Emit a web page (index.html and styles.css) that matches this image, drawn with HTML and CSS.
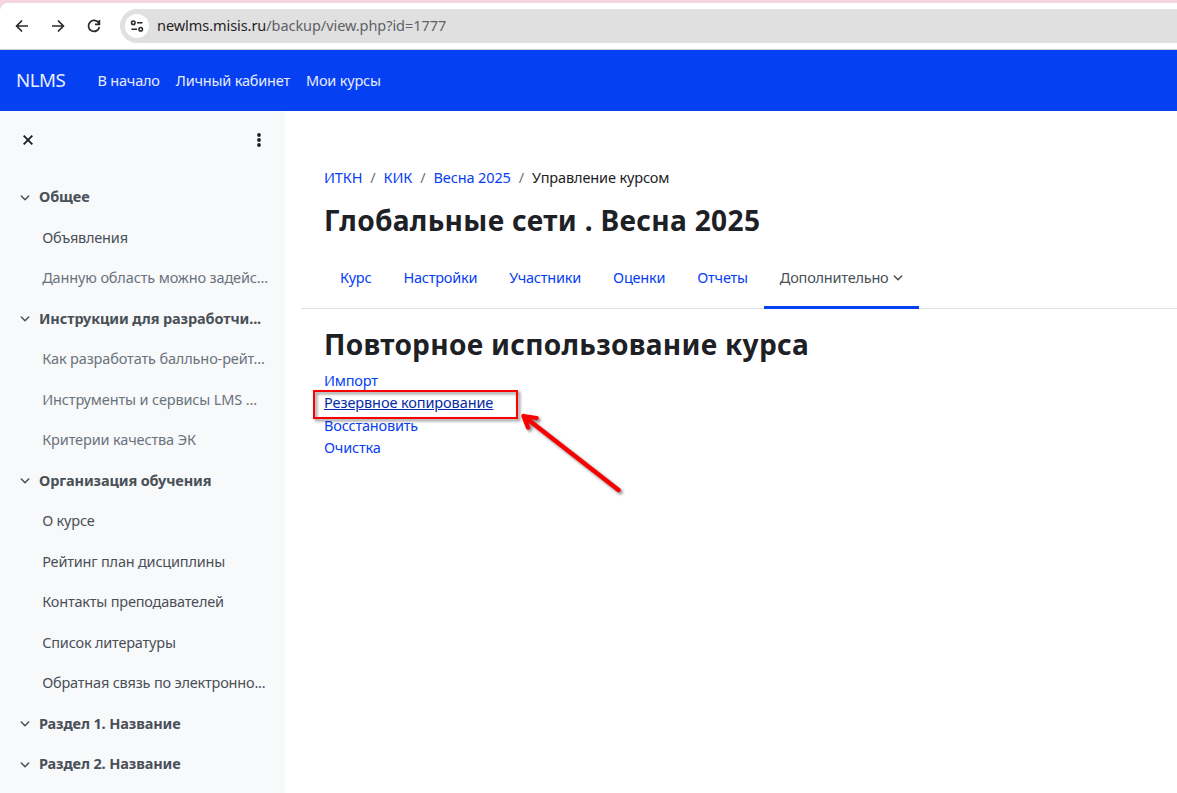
FILE: index.html
```html
<!DOCTYPE html>
<html lang="ru">
<head>
<meta charset="utf-8">
<title>Повторное использование курса</title>
<link rel="stylesheet" href="styles.css">
</head>
<body>
<svg class="defs" width="0" height="0">
  <symbol id="chev" viewBox="0 0 10 6"><path d="M1.300 1 5 4.700 8.700 1" fill="none" stroke="currentColor" stroke-width="1.5" stroke-linecap="round" stroke-linejoin="round"/></symbol>
</svg>
<div class="browser">
  <div class="toolbar">
    <svg class="tool" viewBox="0 0 16 16"><path d="M14 8H3M8 2.5 2.6 8 8 13.5"/></svg>
    <svg class="tool" viewBox="0 0 16 16"><path d="M2 8h11M8 2.5 13.4 8 8 13.5"/></svg>
    <svg class="tool" viewBox="0 0 16 16"><path d="M12.8 5.2A5.5 5.5 0 1 0 13.4 9M13.4 2v4.4H9"/></svg>
    <div class="address">
      <span class="site"><svg viewBox="0 0 14 14"><circle cx="3.3" cy="3.8" r="1.8"/><path d="M7 3.8h5.5M1.5 10.2H7"/><circle cx="10.7" cy="10.2" r="1.8"/></svg></span>
      <span class="url"><b>newlms.misis.ru</b>/backup/view.php?id=1777</span>
    </div>
  </div>
</div>
<nav class="navbar">
  <a class="brand">NLMS</a><a>В начало</a><a>Личный кабинет</a><a>Мои курсы</a>
</nav>
<div class="page">
  <aside class="drawer">
    <div class="drawer-head">
      <svg class="close" viewBox="0 0 10 10"><path d="M.7.700l8.600 8.600M9.300.700.7 9.300"/></svg>
      <svg class="dots" viewBox="0 0 4 14"><circle cx="2" cy="2" r="1.9"/><circle cx="2" cy="7" r="1.9"/><circle cx="2" cy="12" r="1.9"/></svg>
    </div>
    <div class="section"><svg><use href="#chev"/></svg><span>Общее</span></div>
    <div class="item">Объявления</div>
    <div class="item dim">Данную область можно задейс...</div>
    <div class="section"><svg><use href="#chev"/></svg><span>Инструкции для разработчи...</span></div>
    <div class="item dim">Как разработать балльно-рейт...</div>
    <div class="item dim">Инструменты и сервисы LMS ...</div>
    <div class="item dim">Критерии качества ЭК</div>
    <div class="section"><svg><use href="#chev"/></svg><span>Организация обучения</span></div>
    <div class="item">О курсе</div>
    <div class="item">Рейтинг план дисциплины</div>
    <div class="item">Контакты преподавателей</div>
    <div class="item">Список литературы</div>
    <div class="item">Обратная связь по электронно...</div>
    <div class="section"><svg><use href="#chev"/></svg><span>Раздел 1. Название</span></div>
    <div class="section"><svg><use href="#chev"/></svg><span>Раздел 2. Название</span></div>
  </aside>
  <main class="main">
    <div class="crumbs"><a>ИТКН</a><i>/</i><a>КИК</a><i>/</i><a>Весна 2025</a><i>/</i><span>Управление курсом</span></div>
    <h1>Глобальные сети . Весна 2025</h1>
    <div class="tabs">
      <a>Курс</a><a>Настройки</a><a>Участники</a><a>Оценки</a><a>Отчеты</a>
      <a class="active">Дополнительно<svg><use href="#chev"/></svg></a>
    </div>
    <h2>Повторное использование курса</h2>
    <div class="links"><a>Импорт</a><a class="hover">Резервное копирование</a><a>Восстановить</a><a>Очистка</a></div>
  </main>
</div>
<div class="highlight"></div>
<svg class="arrow" viewBox="0 0 120 100"><path d="M103.500 85 8.500 11M21.500 13 8.500 11 13 22.500" /></svg>
</body>
</html>
```
FILE: styles.css
```css
* { box-sizing: border-box; }
body {
  margin: 0;
  width: 1177px;
  height: 793px;
  overflow: hidden;
  position: relative;
  background: #fff;
  color: #1d2125;
  font: 14.5px/22.5px "Noto Sans", sans-serif;
  letter-spacing: -.2px;
}
svg { display: block; flex: none; }
.defs { position: absolute; }
.browser { height: 50px; padding-top: 3px; background: #f6d5e3; }
.toolbar {
  display: flex;
  align-items: center;
  height: 47px;
  padding-left: 14px;
  background: #fff;
  border-bottom: 1px solid #cfcfcf;
  border-top-left-radius: 8px;
}
.tool {
  width: 16px;
  height: 16px;
  margin-right: 20px;
  fill: none;
  stroke: #27292c;
  stroke-width: 1.7;
}
.address {
  flex: 1;
  display: flex;
  align-items: center;
  height: 34px;
  margin-left: -2px;
  padding-left: 5px;
  background: #e0e0e0;
  border-radius: 17px 0 0 17px;
}
.site {
  display: grid;
  place-items: center;
  width: 24px;
  height: 24px;
  margin-right: 8px;
  border-radius: 50%;
  background: #fff;
}
.site svg { width: 14px; height: 14px; fill: none; stroke: #27292c; stroke-width: 1.5; }
.url { margin-top: -1px; color: #5f6266; letter-spacing: -.06px; }
.url b { color: #1f1f1f; font-weight: 400; }
.navbar {
  display: flex;
  align-items: center;
  gap: 16px;
  height: 61px;
  padding-left: 16px;
  background: #0540f2;
  color: #e6ecfe;
}
.brand { width: 49.5px; font-size: 18.75px; letter-spacing: -.5px; margin-right: 16px; }
.page { display: flex; height: 682px; }
.drawer { width: 285px; background: #f8f9fb; color: #495057; }
.drawer-head {
  display: flex;
  align-items: center;
  justify-content: space-between;
  height: 60px;
  margin-bottom: 5px;
  padding: 0 24px 2px 22px;
}
.close { width: 10px; height: 10px; margin-left: .5px; fill: none; stroke: #1d2125; stroke-width: 1.9; }
.dots { width: 4px; height: 14px; fill: #1d2125; }
.section, .item { height: 40.5px; line-height: 40.5px; white-space: nowrap; }
.section { display: flex; align-items: center; padding-left: 20px; font-weight: 700; letter-spacing: -.12px; }
.section svg { width: 10px; height: 6px; margin: 3px 9px 0 0; }
.item { padding-left: 42.2px; }
.dim { color: #6a737b; letter-spacing: -.14px; }
.main { width: 892px; padding: 55px 0 0 16px; }
.main a { color: #0540f2; }
.crumbs { display: flex; padding-left: 23px; letter-spacing: -.13px; }
.crumbs i { margin: 0 8px; color: #6a737b; font-style: normal; }
h1, h2 { margin: 0; padding-left: 23px; font-size: 28.125px; line-height: 34px; font-weight: 700; letter-spacing: .32px; }
h1 { margin-top: 14px; }
.tabs {
  display: flex;
  height: 60px;
  margin-top: 12px;
  padding-left: 23px;
  border-bottom: 1px solid #dee2e6;
  letter-spacing: -.22px;
}
.tabs a { height: 60px; padding: 0 16px; line-height: 56px; }
.main .active {
  display: flex;
  align-items: center;
  border-bottom: 3px solid #0540f2;
  color: #495057;
}
.active svg { width: 10px; height: 6px; margin: 2px 0 0 4px; }
h2 { margin-top: 18px; letter-spacing: .28px; }
.links { display: flex; flex-direction: column; align-items: flex-start; padding: 8px 0 0 23px; }
.links .hover { color: #042ca6; text-decoration: underline; letter-spacing: -.1px; }
/* Callout drawn over the page */
.highlight {
  position: absolute;
  left: 313px;
  top: 390px;
  width: 205px;
  height: 29px;
  border: 2px solid #fa0000;
  filter: drop-shadow(2px 2px 1.5px rgba(0,0,0,.5));
}
.arrow {
  position: absolute;
  left: 515px;
  top: 405px;
  width: 120px;
  height: 100px;
  fill: none;
  stroke: #fa0000;
  stroke-width: 4.300;
  stroke-linecap: round;
  stroke-linejoin: round;
  filter: drop-shadow(2px 2px 1.5px rgba(0,0,0,.5));
}
```
